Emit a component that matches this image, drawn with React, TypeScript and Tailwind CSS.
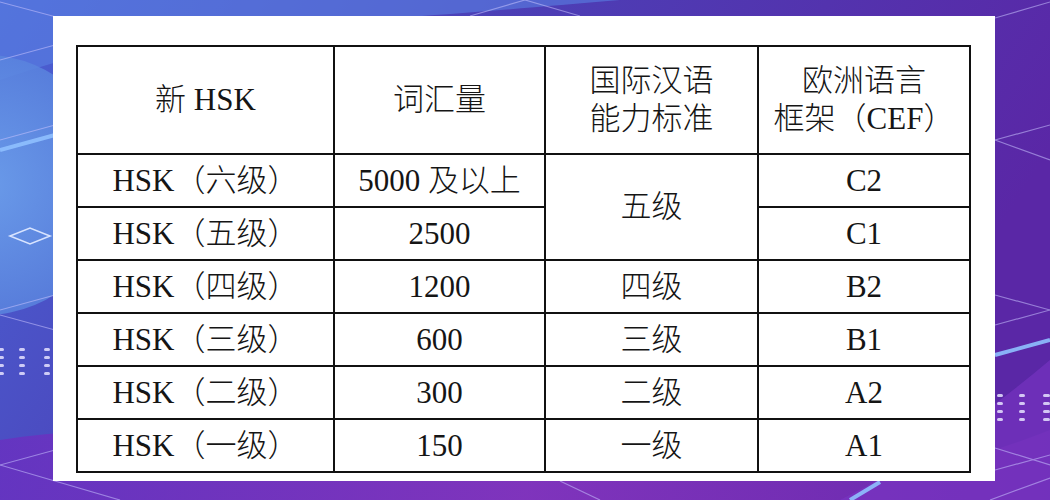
import React from 'react';

type Row = {
  level: string;
  words: string;
  cgs?: string;
  cgsSpan?: number;
  cef: string;
};

const rows: Row[] = [
  { level: 'HSK（六级）', words: '5000 及以上', cgs: '五级', cgsSpan: 2, cef: 'C2' },
  { level: 'HSK（五级）', words: '2500', cef: 'C1' },
  { level: 'HSK（四级）', words: '1200', cgs: '四级', cef: 'B2' },
  { level: 'HSK（三级）', words: '600', cgs: '三级', cef: 'B1' },
  { level: 'HSK（二级）', words: '300', cgs: '二级', cef: 'A2' },
  { level: 'HSK（一级）', words: '150', cgs: '一级', cef: 'A1' },
];

const cell = 'border-2 border-[#111] text-center align-middle p-0';

function Backdrop() {
  return (
    <svg
      className="pointer-events-none absolute inset-0"
      width="1050"
      height="500"
      viewBox="0 0 1050 500"
      aria-hidden
    >
      <defs>
        <linearGradient id="bg" x1="0" y1="0" x2="1" y2="0.3">
          <stop offset="0" stopColor="#4a62d4" />
          <stop offset="0.45" stopColor="#4c3fb6" />
          <stop offset="1" stopColor="#5a27a6" />
        </linearGradient>
        <radialGradient id="orb" cx="0.5" cy="0.5" r="0.5">
          <stop offset="0" stopColor="#6fa6ee" />
          <stop offset="1" stopColor="#5a84de" />
        </radialGradient>
        <linearGradient id="foot" x1="0" y1="0" x2="1" y2="0">
          <stop offset="0" stopColor="#6a2fc0" />
          <stop offset="0.5" stopColor="#8a34c0" />
          <stop offset="1" stopColor="#6c2cb0" />
        </linearGradient>
      </defs>
      <rect width="1050" height="500" fill="url(#bg)" />
      <path d="M0 0 H620 C500 10 420 18 300 22 C200 26 120 40 0 80 Z" fill="#5a80e2" opacity="0.6" />
      <circle cx="-15" cy="185" r="130" fill="url(#orb)" opacity="0.85" />
      <path d="M0 440 C200 410 500 440 700 470 C850 490 950 470 1050 430 V500 H0 Z" fill="url(#foot)" opacity="0.8" />
      <path d="M840 500 C900 470 980 420 1050 360 V500 Z" fill="#7a35c4" opacity="0.6" />
      <g stroke="#c9c4ff" strokeWidth="1.2" fill="none" opacity="0.55">
        <path d="M0 2 L60 18" />
        <path d="M0 60 L55 45" />
        <path d="M0 140 L55 125" />
        <path d="M0 310 L55 295" />
        <path d="M0 315 L55 330" />
        <path d="M0 465 L55 450" />
        <path d="M0 465 L120 500" />
        <path d="M470 16 L525 0 L580 16" />
        <path d="M995 18 L1050 2" />
        <path d="M995 140 L1050 160" />
        <path d="M995 140 L1050 125" />
        <path d="M995 295 L1050 310" />
        <path d="M995 325 L1050 310" />
        <path d="M995 448 L1050 465" />
        <path d="M995 470 L1050 455" />
        <path d="M560 481 L600 500" />
        <path d="M990 500 L1050 478" />
      </g>
      <g stroke="#8fc0ff" strokeWidth="4" opacity="0.9">
        <path d="M0 150 L55 135" />
        <path d="M995 355 L1050 340" />
        <path d="M850 500 L880 482" />
      </g>
      <path d="M10 236 L30 228 L50 236 L30 244 Z" stroke="#d8e4ff" strokeWidth="1.6" fill="none" />
      <g fill="#e6e2ff" opacity="0.85">
        {[348, 356, 364, 372].map((y) => (
          <g key={y}>
            <rect x="-2" y={y} width="6" height="3" rx="1.5" />
            <rect x="19" y={y} width="6" height="3" rx="1.5" />
            <rect x="44" y={y} width="6" height="3" rx="1.5" />
          </g>
        ))}
        {[394, 402, 410, 418].map((y) => (
          <g key={y}>
            <rect x="997" y={y} width="6" height="3" rx="1.5" />
            <rect x="1019" y={y} width="6" height="3" rx="1.5" />
            <rect x="1043" y={y} width="7" height="3" rx="1.5" />
          </g>
        ))}
      </g>
    </svg>
  );
}

export default function App() {
  return (
    <div className="relative h-[500px] w-[1050px] overflow-hidden">
      <Backdrop />
      <div className="relative ml-[53px] mt-[16px] h-[465px] w-[942px] bg-white pl-[23px] pt-[29px]">
        <table
          className="w-[893px] table-fixed border-collapse text-[31px] font-light leading-[38px] text-[#151515]"
          style={{ fontFamily: '"Liberation Serif", "Noto Sans CJK SC", serif' }}
        >
          <colgroup>
            <col className="w-[257px]" />
            <col className="w-[211px]" />
            <col className="w-[213px]" />
            <col className="w-[212px]" />
          </colgroup>
          <thead>
            <tr className="h-[108px]">
              <th className={`${cell} font-light`}>新 HSK</th>
              <th className={`${cell} font-light`}>词汇量</th>
              <th className={`${cell} font-light`}>
                国际汉语
                <br />
                能力标准
              </th>
              <th className={`${cell} font-light`}>
                欧洲语言
                <br />
                框架（CEF）
              </th>
            </tr>
          </thead>
          <tbody>
            {rows.map((row) => (
              <tr key={row.level} className="h-[53px]">
                <td className={cell}>{row.level}</td>
                <td className={cell}>{row.words}</td>
                {row.cgs ? (
                  <td className={cell} rowSpan={row.cgsSpan ?? 1}>
                    {row.cgs}
                  </td>
                ) : null}
                <td className={cell}>{row.cef}</td>
              </tr>
            ))}
          </tbody>
        </table>
      </div>
    </div>
  );
}
